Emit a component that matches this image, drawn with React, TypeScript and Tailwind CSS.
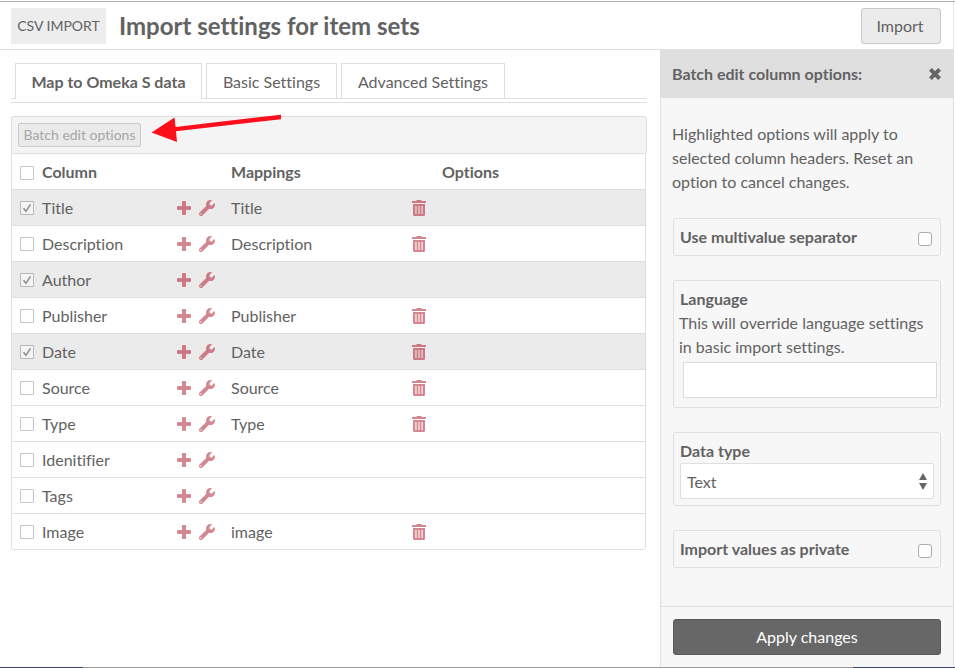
import { FaWrench } from "react-icons/fa";

type Row = { name: string; mapping?: string; checked?: boolean };

const rows: Row[] = [
  { name: "Title", mapping: "Title", checked: true },
  { name: "Description", mapping: "Description" },
  { name: "Author", checked: true },
  { name: "Publisher", mapping: "Publisher" },
  { name: "Date", mapping: "Date", checked: true },
  { name: "Source", mapping: "Source" },
  { name: "Type", mapping: "Type" },
  { name: "Idenitifier" },
  { name: "Tags" },
  { name: "Image", mapping: "image" },
];

function Check({ checked }: { checked?: boolean }) {
  return (
    <span
      className={`flex size-3.5 shrink-0 items-center justify-center rounded-[1px] border ${
        checked ? "border-[#b9b9b9] bg-[#f4f4f4]" : "border-[#c6c6c6] bg-white"
      }`}
    >
      {checked && (
        <svg viewBox="0 0 12 12" className="size-3" fill="none" stroke="#868686" strokeWidth="1.4">
          <path d="M2.500 6.200 5 9.300 9.500 2.300" />
        </svg>
      )}
    </span>
  );
}

function PlusIcon() {
  return (
    <svg viewBox="0 0 14 14" className="h-3.5 w-3.5 shrink-0" fill="currentColor">
      <path d="M6 0h2q1 0 1 1v4h4q1 0 1 1v2q0 1-1 1H9v4q0 1-1 1H6q-1 0-1-1V9H1Q0 9 0 8V6q0-1 1-1h4V1q0-1 1-1Z" />
    </svg>
  );
}

function TrashIcon() {
  return (
    <svg viewBox="0 0 14 16" className="h-4 w-3.5" fill="currentColor">
      <path d="M4.500 0h5v1H14v2H0V1h4.500Z" />
      <path
        fillRule="evenodd"
        d="M1 4h12v10.500q0 1.500-1.500 1.500h-9Q1 16 1 14.500ZM3.400 6v8h1.100V6Zm3.050 0v8h1.100V6ZM9.500 6v8h1.100V6Z"
      />
    </svg>
  );
}

function CloseIcon() {
  return (
    <svg viewBox="0 0 12 12" className="size-3" fill="none" stroke="#666" strokeWidth="4">
      <path d="M1.400 1.400 10.600 10.600M10.600 1.400 1.400 10.600" />
    </svg>
  );
}

function RoundCheck() {
  return <span className="mt-1 size-3.5 rounded-[3px] border border-[#adadad] bg-white" />;
}

export default function App() {
  return (
    <div className="relative flex h-[668px] w-[955px] flex-col overflow-hidden bg-white font-[Lato,sans-serif] text-base leading-6 text-[#626262] [font-variant-ligatures:none]">
      <div className="mt-px h-px shrink-0 bg-[#adadad]" />
      <header className="mr-px flex h-[47px] shrink-0 items-start border-r border-[#e8e8e8] pt-1.5 pr-3 pl-[11px]">
        <div className="flex h-9 w-[95px] items-center justify-center bg-[#ededed] text-sm whitespace-nowrap">
          CSV IMPORT
        </div>
        <h1 className="ml-[13px] text-2xl leading-9 font-bold whitespace-nowrap">Import settings for item sets</h1>
        <button className="ml-auto h-9 w-20 rounded-[3px] border border-[#c8c8c8] bg-[#ebebeb] pr-0.5">Import</button>
      </header>

      <div className="flex h-[618px] shrink-0">
        <main className="w-[660px] border-t border-[#dfdfdf] pt-[13px] pl-[11px]">
          <nav className="flex h-9 w-[636px]">
            <span className="w-1 border-b border-[#dfdfdf]" />
            <span className="flex w-[187px] items-center justify-center border border-b-0 border-[#dfdfdf] pt-px font-bold">
              Map to Omeka S data
            </span>
            <span className="w-1 border-b border-[#dfdfdf]" />
            <span className="flex w-[131px] items-center justify-center border border-[#dfdfdf] pt-0.5">
              Basic Settings
            </span>
            <span className="w-1 border-b border-[#dfdfdf]" />
            <span className="flex w-[164px] items-center justify-center border border-[#dfdfdf] pt-0.5">
              Advanced Settings
            </span>
            <span className="flex-1 border-b border-[#dfdfdf]" />
          </nav>
          <div className="mt-[3px] h-px w-[636px] bg-[#dfdfdf]" />

          <div className="mt-[13px] flex h-[37px] w-[636px] items-start rounded-t-[3px] border border-b-0 border-[#dfdfdf] bg-[#f4f4f4] pt-1.5 pl-1.5">
            <button className="h-6 w-[123px] rounded-[2px] border border-[#c9c9c9] bg-[#eaeaea] text-sm leading-5 whitespace-nowrap text-[#a6a6a6]">
              Batch edit options
            </button>
          </div>

          <div className="w-[635px] rounded-b-[3px] border border-[#dfdfdf]">
            <div className="flex h-[35px] items-center pl-2 font-bold">
              <div className="pt-0.5">
                <Check />
              </div>
              <span className="ml-2 w-[189px]">Column</span>
              <span className="w-[211px]">Mappings</span>
              <span>Options</span>
            </div>
            {rows.map((row) => (
              <div
                key={row.name}
                className={`flex h-9 items-center border-t border-[#dfdfdf] pl-2 ${row.checked ? "bg-[#ebebeb]" : ""}`}
              >
                <div className="pt-px">
                  <Check checked={row.checked} />
                </div>
                <span className="ml-2 w-[135px]">{row.name}</span>
                <span
                  className={`flex w-[54px] items-center gap-2 ${row.checked ? "text-[#cb7984]" : "text-[#d48791]"}`}
                >
                  <PlusIcon />
                  <FaWrench className="size-4" />
                </span>
                <span className="w-[181px]">{row.mapping}</span>
                {row.mapping && (
                  <span className={row.checked ? "text-[#cb7984]" : "text-[#d48791]"}>
                    <TrashIcon />
                  </span>
                )}
              </div>
            ))}
          </div>
        </main>

        <aside className="flex w-[294px] flex-col border-r border-l border-[#dfdfdf] bg-[#f7f7f7]">
          <div className="-ml-px flex h-[49px] shrink-0 items-center justify-between bg-[#dfdfdf] pr-3 pl-3 font-bold">
            <span>Batch edit column options:</span>
            <CloseIcon />
          </div>
          <div className="flex h-[508px] shrink-0 flex-col pt-6 pr-3 pl-3">
            <p className="-ml-px whitespace-nowrap">
              Highlighted options will apply to
              <br />
              selected column headers. Reset an
              <br />
              option to cancel changes.
            </p>
            <div className="mt-6 flex h-[38px] shrink-0 items-center justify-between rounded-[3px] border border-[#dfdfdf] pr-2 pl-1.5 font-bold">
              <span>Use multivalue separator</span>
              <RoundCheck />
            </div>
            <div className="mt-6 h-32 shrink-0 rounded-[3px] border border-[#dfdfdf] pt-1.5 pl-[5px]">
              <div className="ml-px font-bold">Language</div>
              <p className="whitespace-nowrap">
                This will override language settings
                <br />
                in basic import settings.
              </p>
              <div className="mt-[3px] ml-1 h-9 w-[254px] border border-[#dcdcdc] bg-white" />
            </div>
            <div className="mt-6 h-[74px] shrink-0 rounded-[3px] border border-[#dfdfdf] pt-1.5 pl-1.5">
              <div className="font-bold">Data type</div>
              <div className="flex h-9 w-[254px] items-center justify-between rounded-[2px] border border-[#dfdfdf] bg-white px-1.5">
                <span className="pt-0.5">Text</span>
                <svg viewBox="0 0 8 17" className="h-[17px] w-2" fill="#666">
                  <path d="M4 0 8 7H0ZM0 10h8l-4 7Z" />
                </svg>
              </div>
            </div>
            <div className="mt-6 flex h-[38px] shrink-0 items-center justify-between rounded-[3px] border border-[#dfdfdf] pr-2 pl-1.5 font-bold">
              <span>Import values as private</span>
              <RoundCheck />
            </div>
          </div>
          <div className="h-[61px] border-t border-[#dfdfdf] px-3 pt-3">
            <button className="h-9 w-full rounded-[3px] border border-[#595959] bg-[#676767] text-white">
              Apply changes
            </button>
          </div>
        </aside>
      </div>

      <div className="flex h-px shrink-0 bg-[#999]">
        <span className="w-[83px] bg-[#3d4466]" />
        <span className="ml-auto w-[102px] bg-[#3d4466]" />
      </div>

      <svg viewBox="0 0 132 30" className="absolute top-[114px] left-[151px] h-[30px] w-[132px]">
        <path d="M0.500 18.500 23.500 3.500 24.600 13 130 0.700V5.200L25 17.200 26 28Z" fill="#fb0f1b" />
      </svg>
    </div>
  );
}
